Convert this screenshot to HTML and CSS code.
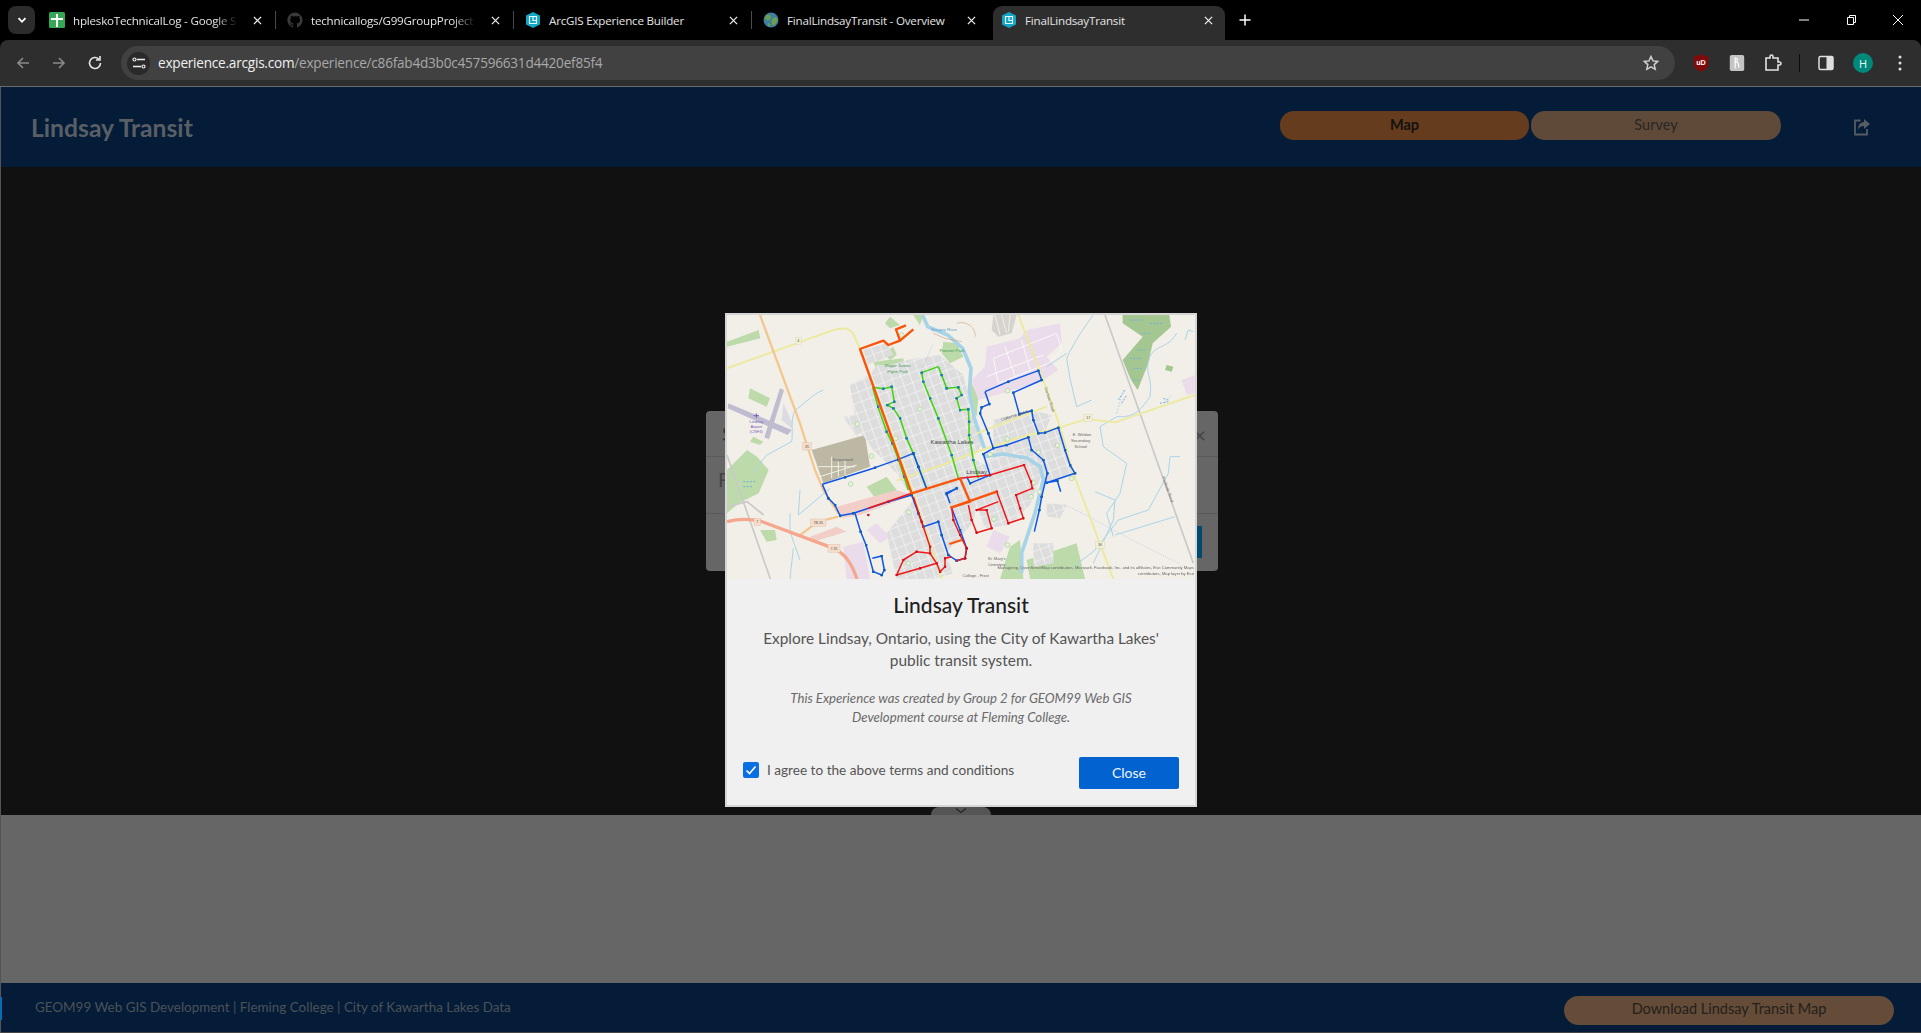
FILE: index.html
```html
<!DOCTYPE html>
<html lang="en">
<head>
<meta charset="utf-8">
<title>FinalLindsayTransit</title>
<link rel="stylesheet" href="styles.css">
</head>
<body>
<div class="tabstrip">
  <button class="tabsearch"><svg width="12" height="12" viewBox="0 0 12 12"><path d="M2.500 4.200 6 7.800l3.500-3.600" fill="none" stroke="#fff" stroke-width="1.800"/></svg></button>
  <div class="tab sep">
    <svg class="fav" viewBox="0 0 16 16"><rect width="16" height="16" rx="1.500" fill="#34a853"/><path d="M7 2h2v4h5v2H9v7H7V8H2V6h5z" fill="#fff"/></svg>
    <span class="tabtitle fade">hpleskoTechnicalLog - Google S</span>
    <svg class="x" viewBox="0 0 10 10"><path d="M1 1l8 8M9 1l-8 8"/></svg>
  </div>
  <div class="tab sep">
    <svg class="fav" viewBox="0 0 16 16"><path d="M8 .5a7.700 7.700 0 0 0-2.400 15c.4.1.5-.2.500-.4v-1.400c-2.100.5-2.600-1-2.600-1-.3-.9-.8-1.100-.8-1.100-.7-.5.1-.5.1-.5.800.1 1.200.8 1.200.8.700 1.200 1.800.8 2.200.6.1-.5.300-.8.500-1-1.700-.2-3.500-.9-3.500-3.800 0-.8.3-1.500.8-2-.1-.2-.4-1 .1-2 0 0 .6-.2 2.100.8a7 7 0 0 1 3.800 0c1.500-1 2.100-.8 2.100-.8.4 1 .2 1.800.1 2 .5.500.8 1.200.8 2 0 2.900-1.800 3.600-3.500 3.800.3.200.5.700.5 1.400v2.100c0 .2.100.5.500.4A7.700 7.700 0 0 0 8 .5z" fill="#3a3a3a"/></svg>
    <span class="tabtitle fade">technicallogs/G99GroupProject</span>
    <svg class="x" viewBox="0 0 10 10"><path d="M1 1l8 8M9 1l-8 8"/></svg>
  </div>
  <div class="tab sep">
    <svg class="fav" viewBox="0 0 16 16"><path d="M8 0l7 3.500v9L8 16l-7-3.500v-9z" fill="#12a5c4"/><path d="M4.500 4.500h7v7h-7zM8 4.500v4h3.500" fill="none" stroke="#e8fbff" stroke-width="1.200"/></svg>
    <span class="tabtitle">ArcGIS Experience Builder</span>
    <svg class="x" viewBox="0 0 10 10"><path d="M1 1l8 8M9 1l-8 8"/></svg>
  </div>
  <div class="tab">
    <svg class="fav" viewBox="0 0 16 16"><circle cx="8" cy="8" r="7.500" fill="#3f7f9e"/><path d="M3 3.500l3-1 2 2-1 3-3 1-2-2zM9 7l4-2 1.500 3-2 4-3 1.500-1-3zM5 11l2 1v2.500l-2-1z" fill="#6f9f4c"/></svg>
    <span class="tabtitle">FinalLindsayTransit - Overview</span>
    <svg class="x" viewBox="0 0 10 10"><path d="M1 1l8 8M9 1l-8 8"/></svg>
  </div>
  <div class="tab active">
    <svg class="fav" viewBox="0 0 16 16"><path d="M8 0l7 3.500v9L8 16l-7-3.500v-9z" fill="#12a5c4"/><path d="M4.500 4.500h7v7h-7zM8 4.500v4h3.500" fill="none" stroke="#e8fbff" stroke-width="1.200"/></svg>
    <span class="tabtitle">FinalLindsayTransit</span>
    <svg class="x" viewBox="0 0 10 10"><path d="M1 1l8 8M9 1l-8 8"/></svg>
  </div>
  <svg class="newtab" viewBox="0 0 12 12"><path d="M6 .5v11M.5 6h11" fill="none" stroke="#fff" stroke-width="1.500"/></svg>
  <div class="winctl">
    <svg viewBox="0 0 12 12"><path d="M1 6h10" stroke="#fff" fill="none"/></svg>
    <svg viewBox="0 0 12 12"><path d="M2.500 3.500h6v7h-6zM4.500 3.500V1.500h6v7h-2" stroke="#fff" fill="none"/></svg>
    <svg viewBox="0 0 12 12"><path d="M1 1l10 10M11 1L1 11" stroke="#fff" fill="none"/></svg>
  </div>
</div>

<div class="toolbar">
  <div class="nav">
    <svg viewBox="0 0 16 16"><path d="M14 8H3M8 3 3 8l5 5" fill="none" stroke="#8a8a8a" stroke-width="1.600"/></svg>
    <svg viewBox="0 0 16 16"><path d="M2 8h11M8 3l5 5-5 5" fill="none" stroke="#8a8a8a" stroke-width="1.600"/></svg>
    <svg viewBox="0 0 16 16"><path d="M13.500 8A5.500 5.500 0 1 1 11.800 4M13 1v4H9" fill="none" stroke="#e6e6e6" stroke-width="1.600"/></svg>
  </div>
  <div class="omnibox">
    <span class="siteinfo"><svg viewBox="0 0 14 14" width="14" height="14"><path d="M5 3.500h8M1 10.500h8" stroke="#eee" stroke-width="1.400"/><circle cx="2.500" cy="3.500" r="1.500" fill="none" stroke="#eee" stroke-width="1.200"/><circle cx="11.500" cy="10.500" r="1.500" fill="none" stroke="#eee" stroke-width="1.200"/></svg></span>
    <span class="url"><b>experience.arcgis.com</b>/experience/c86fab4d3b0c457596631d4420ef85f4</span>
    <svg class="star" viewBox="0 0 16 16"><path d="M8 1.500l2 4.400 4.700.5-3.500 3.200 1 4.700L8 11.900l-4.200 2.400 1-4.700L1.300 6.400 6 5.900z" fill="none" stroke="#cfcfcf" stroke-width="1.500"/></svg>
  </div>
  <div class="tools">
    <svg viewBox="0 0 18 20"><path d="M9 .5l8 2.500v8c0 4-4 7-8 8.500-4-1.500-8-4.500-8-8.500V3z" fill="#800a0a"/><text x="9" y="12.500" class="ublock">uD</text></svg>
    <svg viewBox="0 0 18 20"><rect x="1" y="1" width="16" height="18" rx="2" fill="#c4c4c4"/><path d="M7 4v12M7 9c3-1 4 2 4 6M7 5c2-1 3 1 2 3" fill="none" stroke="#fff" stroke-width="1.300"/></svg>
    <svg viewBox="0 0 18 18"><path d="M2 4h4V2.500a1.500 1.500 0 0 1 3 0V4h5v4h1.500a1.500 1.500 0 0 1 0 3H14v5H2z" fill="none" stroke="#e3e3e3" stroke-width="1.600"/></svg>
    <span class="vdiv"></span>
    <svg viewBox="0 0 18 18"><rect x="2" y="2.500" width="14" height="13" rx="1.500" fill="none" stroke="#dedede" stroke-width="1.500"/><rect x="9.500" y="2.500" width="6.500" height="13" fill="#dedede"/></svg>
    <span class="avatar">H</span>
    <svg viewBox="0 0 18 18"><circle cx="9" cy="3" r="1.500" fill="#dedede"/><circle cx="9" cy="9" r="1.500" fill="#dedede"/><circle cx="9" cy="15" r="1.500" fill="#dedede"/></svg>
  </div>
</div>

<div class="app">
  <header class="header">
    <h1 class="brand">Lindsay Transit</h1>
    <nav class="navbtns">
      <a class="pill pill-map">Map</a>
      <a class="pill pill-survey">Survey</a>
    </nav>
    <svg class="share" viewBox="0 0 18 18"><path d="M7.500 2.500H2v14h12V11" fill="none" stroke="#555c63" stroke-width="1.800"/><path d="M11 1l6 5-6 5V8c-3 0-5 1-6 4 0-5 2-7.500 6-8z" fill="#555c63"/></svg>
  </header>
  <main class="stage"></main>
  <section class="lower"></section>
  <footer class="footer">
    <span class="credit">GEOM99 Web GIS Development | Fleming College | City of Kawartha Lakes Data</span>
    <a class="download">Download Lindsay Transit Map</a>
  </footer>

  <div class="backdialog">
    <div class="bd-head"><span>S</span><span class="bd-x">×</span></div>
    <div class="bd-body">F</div>
    <div class="bd-foot"><span class="bd-btn"></span></div>
  </div>
  <div class="collapse"><svg width="12" height="6" viewBox="0 0 12 6"><path d="M1 .5 6 4.500 11 .5" fill="none" stroke="#222" stroke-width="1.200"/></svg></div>

  <div class="overlay">
    <div class="dialog">
      <svg class="map" viewBox="81 45 1404 792" preserveAspectRatio="none">
        <defs>
          <pattern id="grid" width="27" height="30" patternUnits="userSpaceOnUse" patternTransform="rotate(-20)">
            <rect width="27" height="30" fill="#dddddd"/>
            <path d="M0 0H27M0 0V30" stroke="#fbfbfb" stroke-width="3.500"/>
          </pattern>
          <marker id="db" markerWidth="2" markerHeight="2" refX="1" refY="1"><circle cx="1" cy="1" r="1" fill="#0f5fb5"/></marker>
          <marker id="dr" markerWidth="2" markerHeight="2" refX="1" refY="1"><circle cx="1" cy="1" r=".9" fill="#d0141c"/></marker>
          <marker id="dt" markerWidth="2" markerHeight="2" refX="1" refY="1"><circle cx="1" cy="1" r="1" fill="#1a82a8"/></marker>
        </defs>
        <rect x="81" y="45" width="1404" height="792" fill="#f2efe9"/>
        <g class="parks">
          <path d="M81 125l95-35 5 25-100 25zM150 265l60 30-10 25-55-25zM81 510l60-60 30 20 35 40-30 70-60 30-35 30z"/>
          <path d="M570 50l30 25-30 10-15-15zM640 45h30l-10 30zM730 125l40 5 20 40-40 20-25-30zM520 185l90-10 5 30-80 20zM810 240l25 50-5 60-20-40zM180 690l45 0 5 30-30 5zM650 720l60-30 10 60-50 20zM930 740l30-20 10 117h-70zM980 780l150-50 25 107H990zM500 560l60-30 30 40-60 30zM160 410l30 15-10 10-30-10zM550 160l30-20 10 25-20 15z"/>
          <path class="swamp" d="M1268 45h140l5 35-55 50-15 65-30 75-20-30-25-60 60-70-60-40zM1400 195l20 5-5 15-20-5z"/>
        </g>
        <path class="reeds" d="M1290 60h40M1350 70h40M1310 150h30M1290 175h35M1300 205h25M1350 100h-25M1300 240h18M1255 300l20-30M1265 310l15-25M1380 310l25-5M1390 295l15 5M130 545h40M130 560h30"/>
        <g class="landuse">
          <path d="M860 140l100-25 20-25 100-20 5 60-45 40 35 40-60 40-180 50-20-60 40-40zM1445 240l40-15v55l-25 5z"/>
          <path d="M430 740l60-15 20 112h-70zM880 690l50 20-30 50-40-20zM500 690l30-20 40 40-30 20z"/>
          <path d="M330 710l80-30 30 15-100 30zM410 620l180-50 50 15-160 60-60 10z" class="salmon"/>
        </g>
        <path d="M880 175l190-75 15 50-40 40-150 60zM915 140l30 90M965 120l25 90M860 230l170-65" fill="none" stroke="#fbfaf8" stroke-width="3"/>
        <path d="M335 450l160-45 15 95-140 50z" fill="#bcb8a4"/>
        <path d="M355 500h110M395 470v65M415 480v50M435 480v45M360 530l110-35" stroke="#f2efe9" stroke-width="3" fill="none"/>
        <g fill="url(#grid)">
          <path d="M490 150l70-20 20 35-80 30z"/>
          <path d="M450 255l60-30 20-30 40 0 50-15 100-15 70 60 25 100 15 60 15 50-30 40 60 30-40 70-15 90-50 60-30 30 20 65-60 17H590l-30-137 80-100-50-80-70-70-50-70z"/>
          <path d="M880 360l115-30 60 15-20 50 40-15 45 140-85 30-30-80-60-10-65 15z"/>
          <path d="M860 480l60-15 80 0 25 60-35 90-60 60-80 10-20-80z"/>
          <path d="M1040 610l60 5-20 40-40-5zM1000 730l60 0 0 60-60 10zM430 350l50-10 20 40-30 30z"/>
        </g>
        <path d="M880 45h70l-15 55-40 10-20-20z" fill="#d6d3cf"/>
        <path d="M885 45l15 60M905 45l15 55M930 45l-5 50" stroke="#f2efe9" stroke-width="3"/>
        <path d="M85 310l190 80-12 15-180-80zM240 265l12 5-45 148-14-6z" fill="#c0bcd0"/>
        <path d="M250 310l25 55v20l-30-25z" fill="#dcdae4"/>

        <g class="water-thin">
          <path d="M370 270c-30 10-65 50-85 60-15 30-5 70-10 95M275 425l-75 40-40 50"/>
          <path d="M270 640v55l30 85M280 745l-10 92M300 570l-5 75 95-80"/>
          <path d="M1180 45c-30 40-60 85-80 130l10 60 20 85 45-20M1040 200l60-40"/>
          <path d="M1480 95l-15-5-10 30M1430 100c-30 50-60 30-80 70-20 50 10 60 0 120-40 60-60 60-100 60l-50 30 10 60 70 50-20 90-40 60 20 70"/>
          <path d="M1185 575l60 25-5 60-60 130M1440 470l-30 0-5 50-60 110-90 30-70 90-60 47M1425 650l-180 55"/>
          <path d="M1250 340l20-70M1395 305l20-20" stroke-dasharray="5 5"/>
        </g>
        <path class="river" d="M668 45l15 35 60 25 45 40 25 60-5 70 15 80 30 90M850 470l60-8 70 12 40 25 10 40-25 100-20 60-20 60v60" />
        <path d="M1090 612l80 40 130 70 140 70" fill="none" stroke="#b4b4e8" stroke-width="1.500" stroke-dasharray="4 3"/>
        <path d="M700 100l35 15 50 10M770 70c30-10 60 15 55 40" fill="none" stroke="#c8a27c" stroke-width="1.800"/>
        <path d="M700 130l-35 80M720 200l20 70" fill="none" stroke="#b4b4e8" stroke-width="1.500" stroke-dasharray="4 3"/>

        <g class="rail">
          <path d="M1215 45l265 745M81 465l130 372M81 620l60-15 50 40"/>
        </g>
        <g class="road-y">
          <path d="M81 205 395 92c30-10 50-10 65 10l20 45 160 433 85 257"/>
          <path d="M955 45l75 195 50 140 40 140 120 317M1485 285l-240 82-85-10-80 25-120 30-150 50-75 30-145 50"/>
          <path d="M830 400l210-80"/>
        </g>
        <path class="road-o" d="M180 45 300 370l45 140 25 60 45 70M415 650l-60 15-55 40"/>
        <path class="road-s" d="M81 665c30-8 60-10 100-2l220 82c40 20 55 50 70 92"/>

        <g class="pins">
          <circle cx="923" cy="272" r="7"/><circle cx="660" cy="327" r="7"/><circle cx="472" cy="372" r="7"/><circle cx="587" cy="415" r="7"/><circle cx="515" cy="468" r="7"/><circle cx="452" cy="552" r="7"/><circle cx="627" cy="637" r="7"/><circle cx="882" cy="657" r="7"/><circle cx="922" cy="417" r="7"/><circle cx="870" cy="463" r="7"/><circle cx="1072" cy="436" r="7"/><circle cx="1015" cy="457" r="7"/><circle cx="1115" cy="535" r="7"/><circle cx="1018" cy="575" r="7"/><circle cx="993" cy="590" r="7"/><circle cx="922" cy="735" r="7"/><circle cx="625" cy="790" r="7"/><circle cx="808" cy="410" r="7"/><circle cx="1000" cy="548" r="7"/><circle cx="605" cy="105" r="7"/>
        </g>

        <g class="routes-g">
          <polyline points="518,262 534,320 560,395 577,430 596,480 612,530 625,570"/>
          <polyline points="518,262 550,266 575,260 583,305 562,315 580,325 600,355 620,415 640,460 655,500 680,565"/>
          <polyline points="715,200 665,218 670,245 690,295 715,355 755,465 775,535"/>
          <polyline points="715,200 725,225 740,265 775,262 785,285 770,295 780,330 805,328 807,365 807,405 820,480 835,535"/>
        </g>
        <g class="routes-b">
          <polyline points="367,553 435,532 525,503 595,478 640,460 655,500 680,567"/>
          <polyline points="367,553 385,595 405,615 420,647 460,640 565,605 635,585 655,640 670,680 715,665 725,705 745,765 770,782 795,775 800,745 780,690 755,625"/>
          <polyline points="465,640 482,695 498,735 520,815 545,825 553,810 545,768 517,775"/>
          <polyline points="735,580 770,565 740,582 750,610"/>
          <polyline points="855,275 925,245 1015,212 1025,240 940,278 958,343 995,332 1000,360 1015,400 1035,398 1075,383 1095,450 1110,495 1125,520 1040,548 1072,542 1082,575"/>
          <polyline points="855,275 868,312 845,322 840,340 865,400 880,445 920,435 985,412 995,450 1030,480 1042,520 1025,590 1018,630 1003,695"/>
          <polyline points="880,445 850,462 870,525 810,550 800,530"/>
        </g>
        <g class="routes-r">
          <polyline points="635,580 505,625"/>
          <polyline points="780,535 870,525 972,495 993,545 997,565 948,585 960,625 970,655 925,670 890,575 755,622 760,660 780,705 800,745 795,775 770,782"/>
          <polyline points="805,615 815,660 830,698 875,685 860,630 830,630 895,605"/>
          <polyline points="640,590 665,665 690,740 690,760 710,790 660,805 590,825 610,780 650,755 690,760"/>
          <polyline points="710,790 720,815 735,800 735,775 755,770"/>
        </g>
        <circle cx="505" cy="645" r="4" fill="#d2141e"/>
        <g class="routes-o">
          <polyline points="640,88 600,122 588,88 618,76"/>
          <polyline points="600,122 565,135 550,122 480,147 635,580 780,535 810,605 755,622 890,575"/>
          <polyline points="748,732 785,720"/>
        </g>

        <g class="shields">
          <g><rect x="286" y="113" width="18" height="20"/><text x="295" y="127">4</text></g>
          <g><rect x="308" y="428" width="26" height="22" class="sal"/><text x="321" y="443">35</text></g>
          <g><rect x="162" y="655" width="20" height="22" class="sal"/><text x="172" y="670">7</text></g>
          <g><rect x="332" y="657" width="46" height="22" class="sal"/><text x="355" y="672">7B.35</text></g>
          <g><rect x="384" y="733" width="36" height="24" class="sal"/><text x="402" y="749">7.35</text></g>
          <g><rect x="1152" y="344" width="26" height="20"/><text x="1165" y="358">17</text></g>
          <g><rect x="1187" y="724" width="26" height="22"/><text x="1200" y="739">36</text></g>
        </g>
        <g class="lab-green">
          <text x="593" y="200">Mayor James</text><text x="593" y="218">Flynn Park</text>
          <text x="756" y="156">Pioneer Park</text>
        </g>
        <text x="732" y="92" class="lab-water">Scugog River</text>
        <g class="lab-purple"><text x="169" y="368">Lindsay</text><text x="169" y="384">Airport</text><text x="169" y="399">(CNF4)</text></g>
        <path d="M169 340v14M161 347h16" stroke="#7a5cc0" stroke-width="3"/>
        <text x="756" y="432" class="lab-city">Kawartha Lakes</text>
        <text x="830" y="521" class="lab-city">Lindsay</text>
        <g class="lab-grey">
          <text x="428" y="482">Sugarwood</text>
          <text x="1146" y="408">E. Weldon</text><text x="1142" y="427">Secondary</text><text x="1142" y="443">School</text>
          <text x="890" y="781">St. Mary's</text><text x="890" y="798">Cemetery</text>
          <text x="827" y="830">College - Frost</text>
          <text transform="translate(1045 300) rotate(72)">Durham Road</text>
          <text transform="translate(1400 570) rotate(70)">Fieldside Road</text>
          <text transform="translate(945 350) rotate(-18)">Colborne Street</text>
        </g>
        <g class="attrib">
          <text x="1482" y="807">Manageing, OpenStreetMap contributors, Microsoft, Facebook, Inc. and its affiliates, Esri Community Maps</text>
          <text x="1482" y="826">contributors, Map layer by Esri</text>
        </g>
      </svg>
      <div class="dialog-body">
        <h2 class="d-title">Lindsay Transit</h2>
        <p class="d-lead">Explore Lindsay, Ontario, using the City of Kawartha Lakes' public transit system.</p>
        <p class="d-note">This Experience was created by Group 2 for GEOM99 Web GIS Development course at Fleming College.</p>
        <div class="d-actions">
          <label class="agree">
            <span class="check"><svg width="16" height="16" viewBox="0 0 16 16"><path d="M3.500 8.500 6.500 11.500 12.500 4.500" fill="none" stroke="#fff" stroke-width="1.600"/></svg></span>
            <span class="agree-text">I agree to the above terms and conditions</span>
          </label>
          <button class="close">Close</button>
        </div>
      </div>
    </div>
  </div>
</div>
</body>
</html>
```
FILE: styles.css
```css
* { box-sizing: border-box; }
html, body { margin: 0; height: 100%; }
body {
  height: 1033px;
  overflow: hidden;
  background: #000;
  display: flex;
  flex-direction: column;
  font-family: "Open Sans", "Noto Sans", sans-serif;
}

/* Browser chrome */
.tabstrip {
  height: 40px;
  flex: none;
  background: #000;
  display: flex;
  align-items: flex-start;
  padding: 6px 0 0 8px;
}
.tabsearch {
  width: 27px;
  height: 28px;
  margin-right: 6px;
  padding: 0;
  border: 0;
  border-radius: 8px;
  background: #2c2c2c;
  display: flex;
  align-items: center;
  justify-content: center;
}
.tab {
  position: relative;
  width: 232px;
  height: 34px;
  margin-right: 6px;
  padding: 0 10px 6px 8px;
  display: flex;
  align-items: center;
  border-radius: 9px 9px 0 0;
  color: #e4e4e4;
}
.tab.active { background: #2e2e2e; padding-right: 11px; }
.tab.sep::after {
  content: "";
  position: absolute;
  right: -3px;
  top: 5px;
  height: 18px;
  width: 1px;
  background: #4a4a4a;
}
.fav { width: 16px; height: 16px; flex: none; }
.tabtitle {
  flex: 1;
  margin: 0 8px;
  font-family: "Open Sans", sans-serif;
  font-size: 11.600px;
  letter-spacing: -0.200px;
  white-space: nowrap;
}
.tabtitle.fade {
  -webkit-mask-image: linear-gradient(90deg, #000 142px, transparent 165px);
  mask-image: linear-gradient(90deg, #000 142px, transparent 165px);
}
.x { width: 9px; height: 9px; flex: none; fill: none; stroke: #efefef; stroke-width: 1.400; margin-right: 1px; }
.newtab { width: 12px; height: 12px; margin: 8px 0 0 8px; flex: none; }
.winctl {
  margin-left: auto;
  display: flex;
  gap: 35px;
  padding: 8px 17px 0 0;
}
.winctl svg { width: 12px; height: 12px; }

.toolbar {
  height: 47px;
  flex: none;
  background: #2e2e2e;
  border-bottom: 1px solid #6a6a6a;
  border-radius: 8px 8px 0 0;
  display: flex;
  align-items: flex-start;
  padding: 6px 0 0 15px;
}
.nav { display: flex; gap: 20px; padding-top: 9px; width: 106px; }
.nav svg { width: 16px; height: 16px; }
.omnibox {
  width: 1554px;
  height: 34px;
  background: #414141;
  border-radius: 17px;
  display: flex;
  align-items: center;
  padding: 0 16px 0 6px;
}
.siteinfo {
  width: 23px;
  height: 23px;
  border-radius: 50%;
  background: #2a2a2a;
  display: flex;
  align-items: center;
  justify-content: center;
  flex: none;
}
.url {
  margin-left: 8px;
  flex: 1;
  font-size: 13.600px;
  letter-spacing: -0.230px;
  color: #a8a8a8;
  white-space: nowrap;
  padding-bottom: 1px;
}
.url b { font-weight: 400; color: #f0f0f0; }
.star { width: 16px; height: 16px; flex: none; }
.tools {
  display: flex;
  align-items: center;
  height: 34px;
  margin-left: 17px;
  gap: 18px;
}
.tools svg { width: 18px; height: 18px; flex: none; }
.ublock { fill: #fff; font: 700 8px "Liberation Sans", sans-serif; text-anchor: middle; }
.vdiv { width: 1px; height: 18px; background: #0c0c0c; margin: 0 -1px 0 -1px; }
.avatar {
  width: 20px;
  height: 20px;
  border-radius: 50%;
  background: #00897b;
  color: #e8fff9;
  font-size: 11px;
  display: flex;
  align-items: center;
  justify-content: center;
  flex: none;
}

/* Dimmed application */
.app {
  position: relative;
  flex: 1;
  min-height: 0;
  display: flex;
  flex-direction: column;
  font-family: Lato, "Open Sans", sans-serif;
  border-left: 1px solid #555;
}
.header {
  height: 80px;
  flex: none;
  background: #041c38;
  display: flex;
  align-items: flex-start;
  padding-left: 30px;
}
.brand {
  margin: 0;
  padding-top: 23px;
  font-size: 24.700px;
  line-height: 36px;
  font-weight: 700;
  color: #5a5f66;
}
.navbtns {
  display: flex;
  gap: 2px;
  margin-left: auto;
  padding-top: 24px;
  margin-right: 2px;
}
.pill {
  height: 29px;
  line-height: 27px;
  text-align: center;
  border-radius: 14px;
  font-size: 14.500px;
  color: #2a2621;
}
.pill-map { width: 249px; background: #653c1e; color: #141210; font-weight: 700; }
.pill-survey { width: 250px; background: #5f4a3a; }
.share { width: 18px; height: 18px; margin: 31px 50px 0 70px; flex: none; }
.stage { flex: 1; background: #111; }
.lower { height: 168px; flex: none; background: #666; }
.footer {
  height: 50px;
  flex: none;
  background: #041c38;
  border-bottom: 1px solid #444;
  display: flex;
  align-items: flex-start;
  padding-left: 34px;
  position: relative;
}
.footer::before {
  content: "";
  position: absolute;
  left: -1px;
  top: 14px;
  width: 2px;
  height: 23px;
  background: #0b6ab0;
}
.credit { padding-top: 14px; font-size: 13.450px; line-height: 20px; color: #4c5157; }
.download {
  width: 330px;
  height: 29px;
  margin: 13px 27px 0 auto;
  line-height: 26px;
  text-align: center;
  border-radius: 15px;
  background: #654c38;
  color: #231f1b;
  font-size: 14.500px;
}

/* Dialog behind */
.backdialog {
  position: absolute;
  left: 705px;
  top: 324px;
  width: 512px;
  height: 160px;
  background: #666;
  border-radius: 4px;
  color: #333;
  font-size: 20px;
}
.bd-head {
  height: 46px;
  padding: 10px 12px 0 16px;
  display: flex;
  justify-content: space-between;
  border-bottom: 1px solid #5a5a5a;
}
.bd-x { font-size: 22px; color: #444; }
.bd-body { height: 57px; padding: 10px 12px; border-bottom: 1px solid #5a5a5a; color: #444; }
.bd-foot { position: relative; }
.bd-btn { position: absolute; right: 16px; top: 12px; width: 80px; height: 32px; background: #004a70; }
.collapse {
  position: absolute;
  left: 930px;
  top: 720px;
  width: 60px;
  height: 8px;
  background: #555;
  border-radius: 10px 10px 0 0;
  display: flex;
  justify-content: center;
  align-items: center;
}

/* Main dialog */
.overlay {
  position: absolute;
  inset: 0;
  display: grid;
  place-items: center;
}
.dialog {
  width: 472px;
  height: 494px;
  background: #f0f0f0;
  border: 2px solid #d6d6d6;
  display: flex;
  flex-direction: column;
}
.map { display: block; width: 468px; height: 264px; flex: none; filter: blur(0.500px); }
.landuse { fill: #eadcea; }
.landuse .salmon { fill: #f1cfc8; }
.parks { fill: #bddaaa; }
.parks .swamp { fill: #a4c791; }
.reeds { fill: none; stroke: #6fb0d8; stroke-width: 3; stroke-dasharray: 6 4; }
.water-thin { fill: none; stroke: #a9d5ea; stroke-width: 3; }
.river { fill: none; stroke: #a6d4e6; stroke-width: 11; }
.rail { fill: none; stroke: #c9c9c9; stroke-width: 5; }
.road-y { fill: none; stroke: #ecea9f; stroke-width: 6; }
.road-o { fill: none; stroke: #f3c890; stroke-width: 7; }
.road-s { fill: none; stroke: #f5a78e; stroke-width: 10; }
.pins circle { fill: #e6f2dc; stroke: #a9cf9c; stroke-width: 2; }
.routes-g polyline, .routes-b polyline, .routes-r polyline, .routes-o polyline { fill: none; stroke-linejoin: round; }
.routes-g polyline { stroke: #3fd40c; stroke-width: 4.500; marker-mid: url(#dt); }
.routes-b polyline { stroke: #0f55e6; stroke-width: 4.500; marker-mid: url(#db); }
.routes-r polyline { stroke: #f01818; stroke-width: 4.500; marker-mid: url(#dr); }
.routes-o polyline { stroke: #f9540a; stroke-width: 7; }
.shields rect { fill: #f2f0d4; stroke: #cfcdb0; stroke-width: 1; }
.shields rect.sal { fill: #f6dccb; stroke: #d8b8a4; }
.shields text { font: 11px "Liberation Sans", sans-serif; fill: #555; text-anchor: middle; }
.lab-green text { font: 13px "Liberation Sans", sans-serif; fill: #3d9a55; text-anchor: middle; }
.lab-water { font: 13px "Liberation Sans", sans-serif; fill: #5a9fd0; text-anchor: middle; }
.lab-purple text { font: 12px "Liberation Sans", sans-serif; fill: #7a5cc0; text-anchor: middle; }
.lab-city { font: 18px "Liberation Sans", sans-serif; fill: #444; text-anchor: middle; }
.lab-grey text { font: 12px "Liberation Sans", sans-serif; fill: #666; text-anchor: middle; }
.attrib text { font: 12.500px "Liberation Sans", sans-serif; fill: #666; text-anchor: end; }

.dialog-body {
  flex: 1;
  display: flex;
  flex-direction: column;
  align-items: center;
  text-align: center;
  padding: 12px 16px 0;
}
.d-title {
  margin: 0;
  font-size: 21px;
  line-height: 28px;
  font-weight: 500;
  color: #1f1f1f;
}
.d-lead {
  margin: 8px 0 0;
  font-size: 15.400px;
  line-height: 22px;
  color: #555;
  width: 420px;
}
.d-note {
  margin: 18px 0 0;
  font-size: 13.200px;
  line-height: 19px;
  font-style: italic;
  color: #6a6a6a;
  width: 370px;
}
.d-actions {
  width: 100%;
  margin-top: 30px;
  display: flex;
  align-items: flex-start;
  justify-content: space-between;
}
.agree { display: flex; align-items: center; gap: 8px; padding: 5px 0 0 0; }
.check {
  width: 16px;
  height: 16px;
  background: #0a6fe0;
  border-radius: 2px;
  display: block;
}
.check svg { display: block; }
.agree-text { font-size: 13.600px; color: #555; }
.close {
  width: 100px;
  height: 32px;
  border: 0;
  border-radius: 2px;
  background: #0262d0;
  color: #eef6ff;
  font: 14px Lato, sans-serif;
  padding: 0 0 2px;
}
```
